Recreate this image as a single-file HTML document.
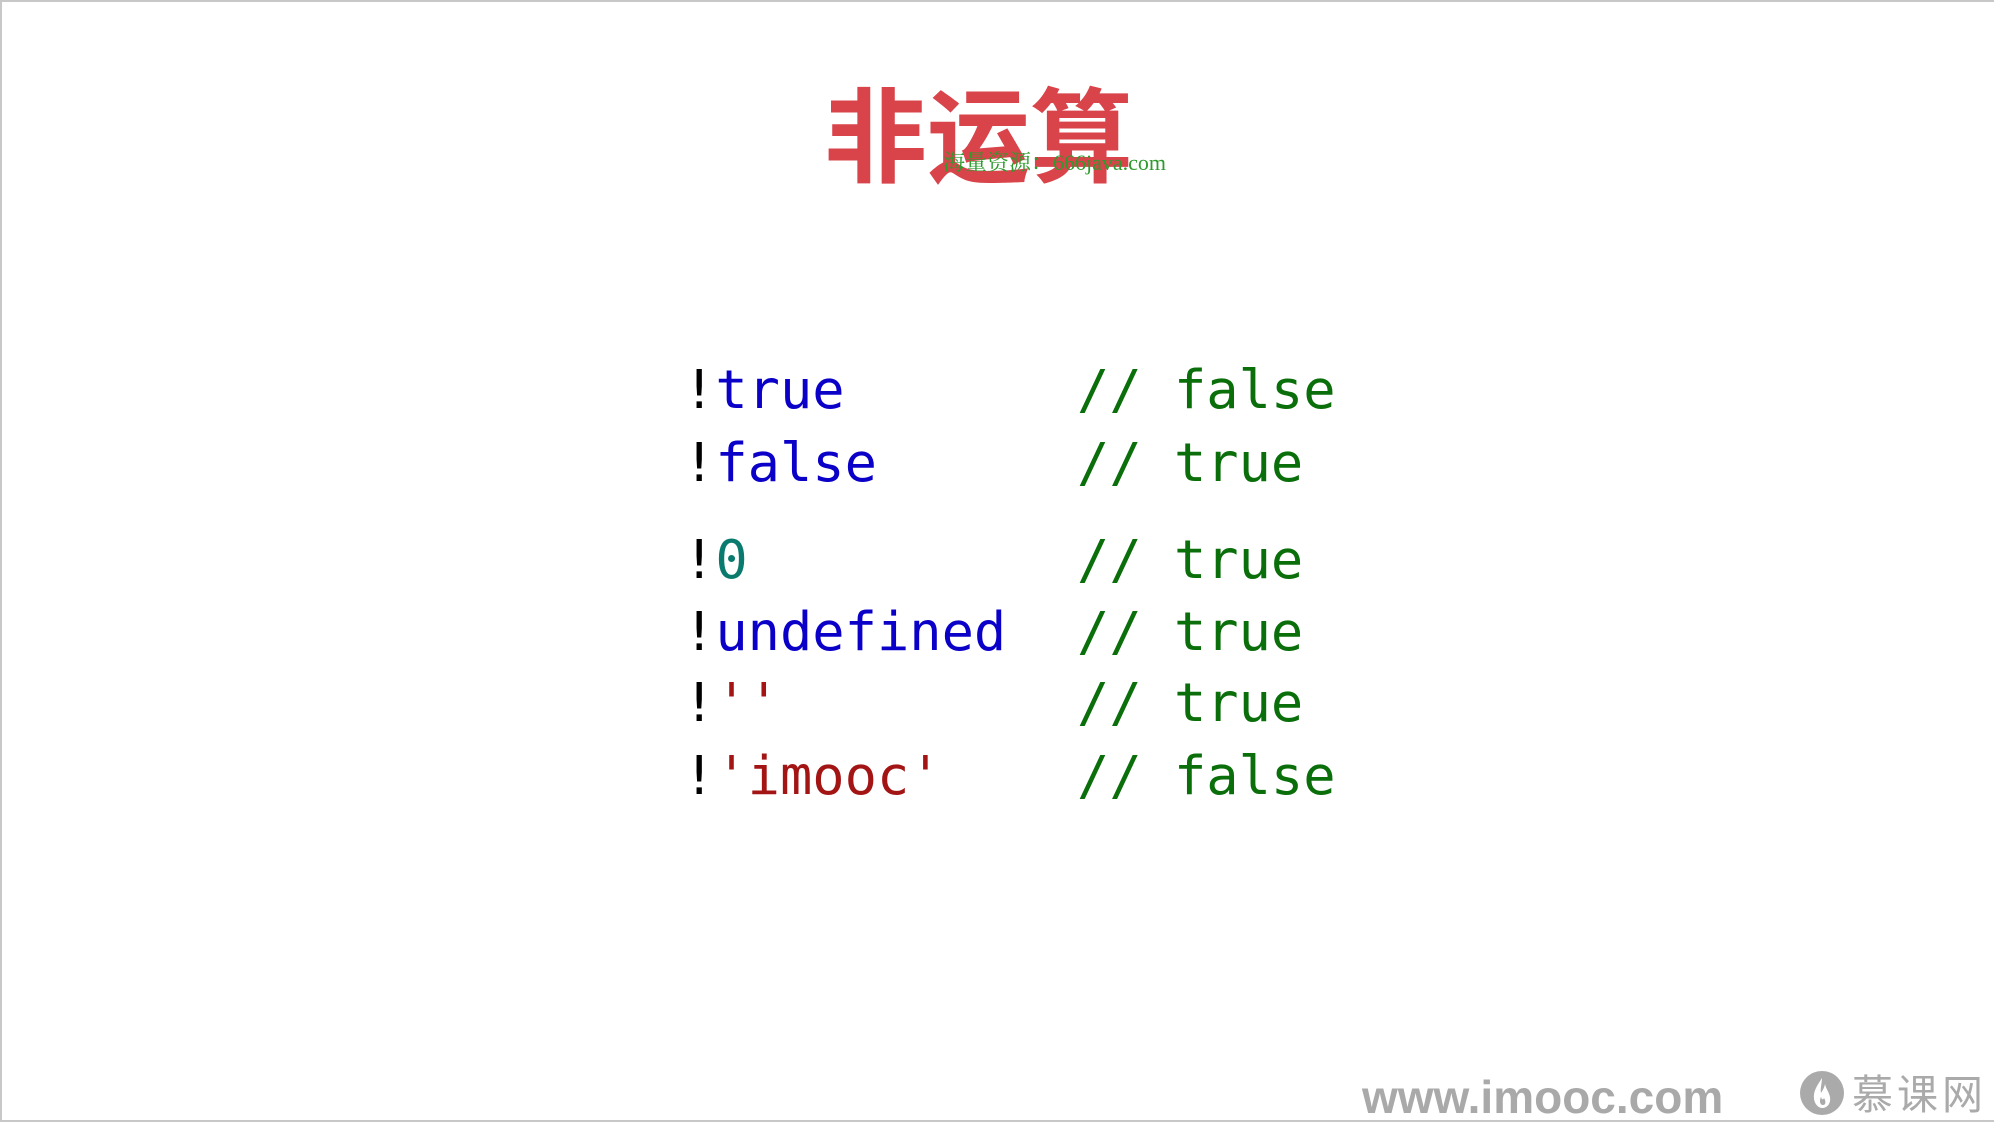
<!DOCTYPE html>
<html><head><meta charset="utf-8"><style>
html,body{margin:0;padding:0}
body{width:1994px;height:1122px;position:relative;background:#fff;overflow:hidden;box-sizing:border-box;border-top:2px solid #c8c8c8;border-left:2px solid #c8c8c8;border-bottom:2px solid #c8c8c8}
.t{position:absolute;left:822px;top:76px;font:bold 103px/1 "Noto Sans CJK SC",sans-serif;color:#d9434a;white-space:nowrap}
.wm{position:absolute;left:941px;top:150px;font:22px/1 "Liberation Serif","Noto Serif CJK SC",serif;color:#2e9a2e;white-space:nowrap}
.code{position:absolute;left:681px;font:53.7px/1 "DejaVu Sans Mono","Liberation Mono",monospace;white-space:pre;color:#000}
.cm{position:absolute;left:1075px;font:53.7px/1 "DejaVu Sans Mono","Liberation Mono",monospace;white-space:pre;color:#0a6e0a}
.b{color:#0a00c8}.c{color:#0a7a6e}.r{color:#a31515}
.f{position:absolute;left:1360px;top:1072px;font:bold 46px/1 "Liberation Sans",sans-serif;color:#a9a9a9;white-space:nowrap}
.m{position:absolute;left:1850px;top:1069px;font:41px/1 "Noto Sans CJK SC",sans-serif;color:#aaa;letter-spacing:4px;white-space:nowrap}
</style></head><body>
<div class="t">非运算</div>
<div class="wm">海量资源：666java.com</div>
<div class="code" style="top:361px">!<span class="b">true</span></div>
<div class="code" style="top:434px">!<span class="b">false</span></div>
<div class="code" style="top:531px">!<span class="c">0</span></div>
<div class="code" style="top:603px">!<span class="b">undefined</span></div>
<div class="code" style="top:674px">!<span class="r">''</span></div>
<div class="code" style="top:747px">!<span class="r">'imooc'</span></div>
<div class="cm" style="top:361px">// false</div>
<div class="cm" style="top:434px">// true</div>
<div class="cm" style="top:531px">// true</div>
<div class="cm" style="top:603px">// true</div>
<div class="cm" style="top:674px">// true</div>
<div class="cm" style="top:747px">// false</div>
<div class="f">www.imooc.com</div>
<svg style="position:absolute;left:1797px;top:1068px" width="46" height="46" viewBox="0 0 46 46">
<circle cx="23" cy="23" r="22" fill="#aaa"/>
<path d="M23 8 C18 16 14 21 15 29 C16 35 20 38 23 38 C28 38 32 34 31 27 C30 22 27 19 26 14 C25 19 23 21 22 23 C21 19 23 13 23 8Z" fill="#fff"/>
<path d="M22 27 C20 31 21 35 24 35 C27 35 27 31 25 28 C24 30 23 30 22 27Z" fill="#aaa"/>
</svg>
<div class="m">慕课网</div>
</body></html>
